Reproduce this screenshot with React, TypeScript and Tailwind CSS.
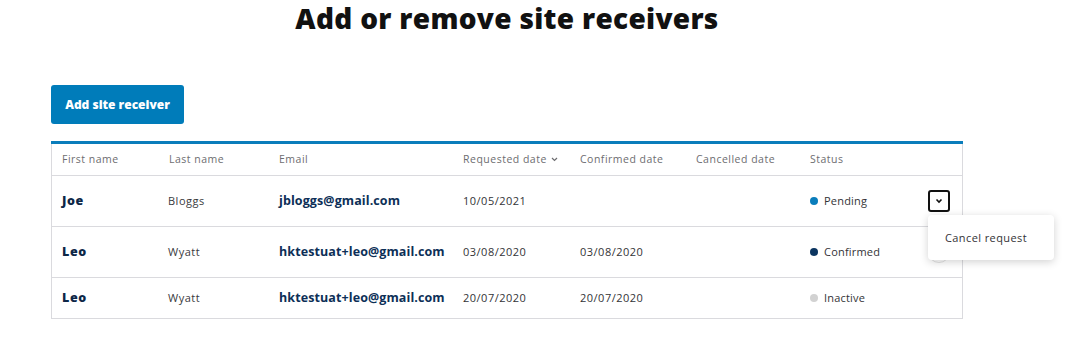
import React from "react";

type Row = {
  first: string;
  last: string;
  email: string;
  requested: string;
  confirmed: string;
  cancelled: string;
  status: "Pending" | "Confirmed" | "Inactive";
  h: string;
};

const rows: Row[] = [
  { first: "Joe", last: "Bloggs", email: "jbloggs@gmail.com", requested: "10/05/2021", confirmed: "", cancelled: "", status: "Pending", h: "h-[51px]" },
  { first: "Leo", last: "Wyatt", email: "hktestuat+leo@gmail.com", requested: "03/08/2020", confirmed: "03/08/2020", cancelled: "", status: "Confirmed", h: "h-[51px]" },
  { first: "Leo", last: "Wyatt", email: "hktestuat+leo@gmail.com", requested: "20/07/2020", confirmed: "20/07/2020", cancelled: "", status: "Inactive", h: "h-[40px]" },
];

const dot: Record<Row["status"], string> = {
  Pending: "bg-[#0a7dbb]",
  Confirmed: "bg-[#0b3560]",
  Inactive: "bg-[#d2d2d2]",
};

const cols = "grid grid-cols-[107px_110px_184px_117px_116px_114px_1fr]";

export default function App() {
  return (
    <div className="w-[1076px] h-[340px] bg-white overflow-hidden" style={{ fontFamily: "'Open Sans', Lato, sans-serif" }}>
      <div className="ml-[51px] w-[912px]">
        <h1 className="text-center text-[28px] leading-[36px] font-extrabold text-[#111] pt-[0px] tracking-[0.3px]">
          Add or remove site receivers
        </h1>
        <button className="mt-[49px] h-[39px] w-[133px] rounded-[3px] bg-[#007cba] text-white text-[12px] font-extrabold">
          Add site receiver
        </button>
        <div className="mt-[17px] border-t-[3px] border-[#0a7dbb]">
          <div className="border-x border-b border-[#dadade]">
            <div className={`${cols} h-[32px] items-center border-b border-[#dadade] text-[10.5px] text-[#6d6d70] tracking-[0.5px]`}>
              <div className="pl-[10px]">First name</div>
              <div className="pl-[10px]">Last name</div>
              <div className="pl-[10px]">Email</div>
              <div className="pl-[10px] flex items-center gap-[4px]">
                Requested date
                <svg width="7" height="5" viewBox="0 0 7 5" fill="none" stroke="#6d6d70" strokeWidth="1.2"><path d="M1 1l2.5 2.5L6 1" /></svg>
              </div>
              <div className="pl-[10px]">Confirmed date</div>
              <div className="pl-[10px]">Cancelled date</div>
              <div className="pl-[10px]">Status</div>
            </div>
            {rows.map((r, i) => (
              <div key={i} className={`${cols} ${r.h} items-center ${i < rows.length - 1 ? "border-b border-[#dadade]" : ""}`}>
                <div className="pl-[10px] text-[12.5px] font-extrabold text-[#0d2747] tracking-[0.6px]">{r.first}</div>
                <div className="pl-[9px] text-[11px] text-[#3a3a3d] tracking-[0.5px]">{r.last}</div>
                <div className="pl-[10px] text-[12.5px] font-bold text-[#0d2f57] tracking-[0.1px]">{r.email}</div>
                <div className="pl-[10px] text-[11px] text-[#333336] tracking-[0.5px]">{r.requested}</div>
                <div className="pl-[10px] text-[11px] text-[#333336] tracking-[0.5px]">{r.confirmed}</div>
                <div className="pl-[10px] text-[11px] text-[#333336] tracking-[0.5px]">{r.cancelled}</div>
                <div className="pl-[10px] pr-[12px] flex items-center justify-between">
                  <div className="flex items-center gap-[6px] text-[11px] text-[#333336] tracking-[0.2px]">
                    <span className={`w-[8px] h-[8px] rounded-full ${dot[r.status]}`} />
                    {r.status}
                  </div>
                  {i === 0 && (
                    <div className="relative">
                      <button className="w-[22px] h-[22px] rounded-[3px] border-2 border-[#111] flex items-center justify-center bg-white">
                        <svg width="8" height="6" viewBox="0 0 8 6" fill="none" stroke="#111" strokeWidth="1.6"><path d="M1.5 1.5l2.5 2.5 2.5-2.5" /></svg>
                      </button>
                      <div className="absolute left-0 top-[25px] w-[126px] h-[45px] rounded-[4px] bg-white shadow-[0_2px_8px_rgba(0,0,0,0.18)] flex items-center pl-[17px] pt-[1px] text-[11px] text-[#333336] tracking-[0.4px] z-10 whitespace-nowrap">
                        Cancel request
                      </div>
                    </div>
                  )}
                  {i === 1 && (
                    <div className="w-[22px] h-[22px] rounded-full border border-[#e2e2e2]" />
                  )}
                </div>
              </div>
            ))}
          </div>
        </div>
      </div>
    </div>
  );
}
